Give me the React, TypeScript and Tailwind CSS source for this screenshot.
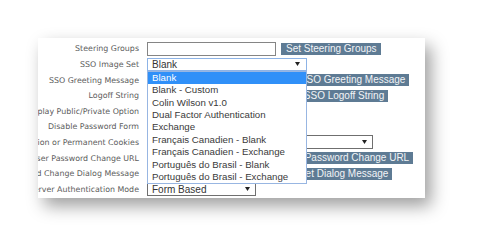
import React from "react";

const labelCls =
  "flex justify-end items-center h-full pt-[1px] whitespace-nowrap text-[7.9px] text-[#5c5c5c] [font-family:'DejaVu_Sans',Verdana,sans-serif]";

function Arrow() {
  return (
    <svg width="5" height="4" viewBox="0 0 5 4" className="shrink-0">
      <polygon points="0,0 5,0 2.5,4" fill="#222" />
    </svg>
  );
}

function Btn({ children }: { children: React.ReactNode }) {
  return (
    <div className="h-[12px] flex items-center pl-[5px] pr-[4px] bg-[#5e7b94] text-[#f2f4f6] text-[10px] leading-none whitespace-nowrap">
      {children}
    </div>
  );
}

function TextInput({ w }: { w: string }) {
  return <div className={`h-[14px] border border-[#858585] bg-white ${w}`} />;
}

const options = [
  "Blank",
  "Blank - Custom",
  "Colin Wilson v1.0",
  "Dual Factor Authentication",
  "Exchange",
  "Français Canadien - Blank",
  "Français Canadien - Exchange",
  "Português do Brasil - Blank",
  "Português do Brasil - Exchange",
];

export default function App() {
  const rows: { label: string; control: React.ReactNode }[] = [
    {
      label: "Steering Groups",
      control: (
        <div className="flex items-center gap-[5px]">
          <TextInput w="w-[129px]" />
          <Btn>Set Steering Groups</Btn>
        </div>
      ),
    },
    {
      label: "SSO Image Set",
      control: (
        <div className="relative z-10 w-[160px]">
          <div className="h-[13px] border border-[#8db3e6] bg-white flex items-center justify-between pl-[4px] pr-[6px] text-[10px] text-[#333]">
            <span>Blank</span>
            <Arrow />
          </div>
          <div className="absolute top-full left-0 w-[160px] border border-[#98b6e2] bg-white">
            {options.map((o, i) => (
              <div
                key={o}
                className={`h-[12.4px] flex items-center pl-[4px] text-[9.7px] whitespace-nowrap ${
                  i === 0 ? "bg-[#3090f8] text-white" : "text-[#3a3a3a]"
                }`}
              >
                {o}
              </div>
            ))}
          </div>
        </div>
      ),
    },
    {
      label: "SSO Greeting Message",
      control: (
        <div className="flex items-center gap-[5px]">
          <TextInput w="w-[125px]" />
          <Btn>Set SSO Greeting Message</Btn>
        </div>
      ),
    },
    {
      label: "Logoff String",
      control: (
        <div className="flex items-center gap-[5px]">
          <TextInput w="w-[129px]" />
          <Btn>Set SSO Logoff String</Btn>
        </div>
      ),
    },
    {
      label: "Display Public/Private Option",
      control: <div className="w-[11px] h-[11px] border border-[#858585] bg-white" />,
    },
    {
      label: "Disable Password Form",
      control: <div className="w-[11px] h-[11px] border border-[#858585] bg-white" />,
    },
    {
      label: "Session or Permanent Cookies",
      control: (
        <div className="w-[226px] h-[14px] border border-[#6f6f6f] bg-white flex items-center justify-end pr-[5px]">
          <Arrow />
        </div>
      ),
    },
    {
      label: "User Password Change URL",
      control: (
        <div className="flex items-center gap-[5px]">
          <TextInput w="w-[106px]" />
          <Btn>Set User Password Change URL</Btn>
        </div>
      ),
    },
    {
      label: "Password Change Dialog Message",
      control: (
        <div className="flex items-center gap-[5px]">
          <TextInput w="w-[113px]" />
          <Btn>Set Reset Dialog Message</Btn>
        </div>
      ),
    },
    {
      label: "Server Authentication Mode",
      control: (
        <div className="w-[109px] h-[13px] border border-[#6f6f6f] bg-white flex items-center justify-between pl-[4px] pr-[5px] text-[10px] text-[#333]">
          <span>Form Based</span>
          <Arrow />
        </div>
      ),
    },
  ];

  return (
    <div className="w-[478px] h-[251px] bg-white pt-[38px] pl-[38px] overflow-hidden [font-family:'Liberation_Sans',Arial,sans-serif]">
      <div className="relative w-[387px] h-[160px] bg-white overflow-hidden shadow-[6px_8px_16px_rgba(0,0,0,0.38)]">
        <div className="pt-[3px] grid grid-cols-[101px_1fr] gap-x-[8px] auto-rows-[15.6px]">
          {rows.map((r) => (
            <React.Fragment key={r.label}>
              <div className={labelCls}>
                <span>{r.label}</span>
              </div>
              <div className="flex items-center h-full">{r.control}</div>
            </React.Fragment>
          ))}
        </div>
      </div>
    </div>
  );
}
